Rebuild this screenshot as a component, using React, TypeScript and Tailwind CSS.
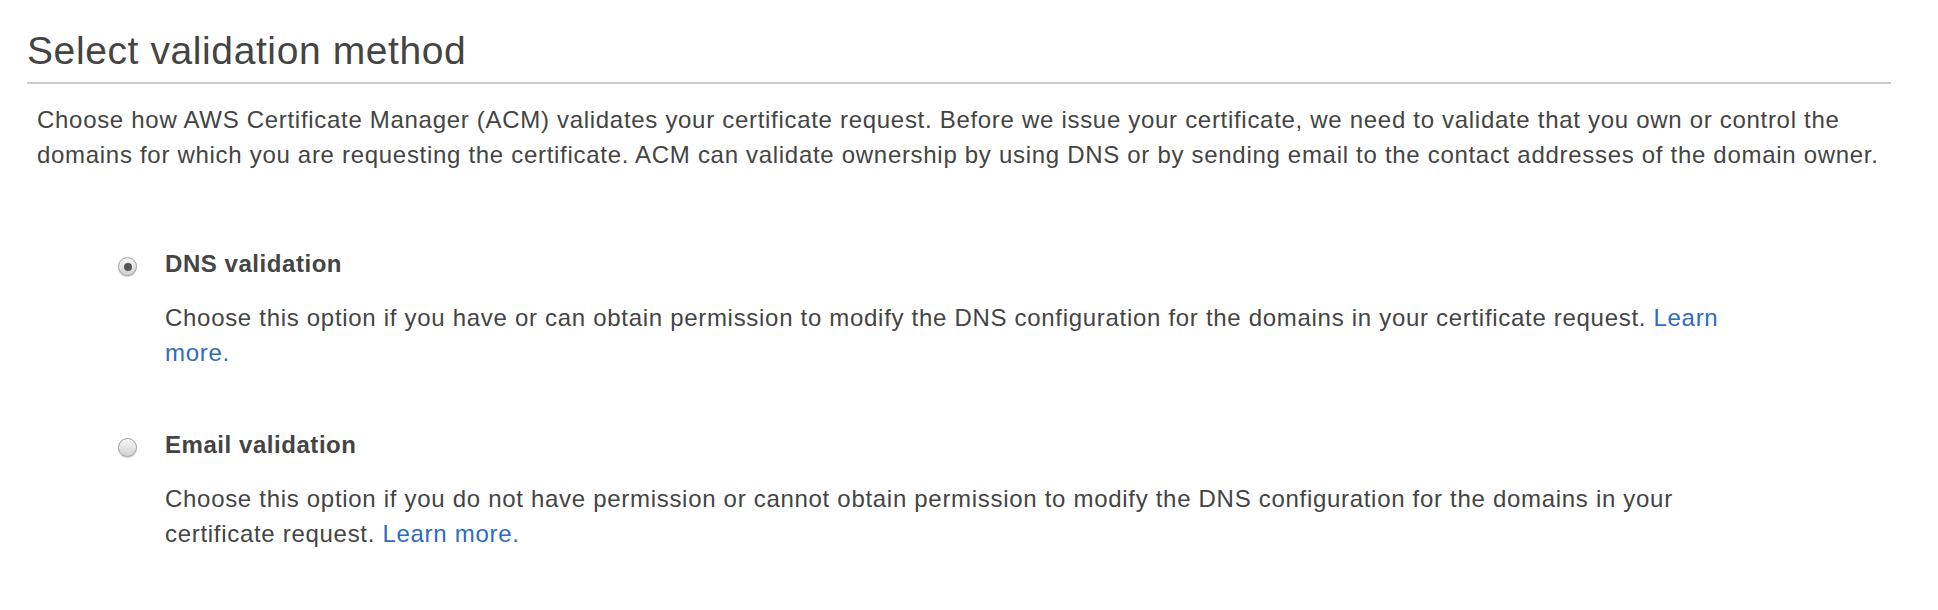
import React, { useState } from 'react';

type Method = 'dns' | 'email';

const Radio: React.FC<{ checked: boolean; onClick: () => void }> = ({ checked, onClick }) => (
  <button
    type="button"
    onClick={onClick}
    className="mt-[11px] w-[19px] h-[19px] shrink-0 rounded-full border border-[#a0a0a0] bg-gradient-to-b from-[#f7f7f7] to-[#d2d2d2] shadow-[0_1px_1px_rgba(0,0,0,0.2)] flex items-center justify-center"
  >
    {checked && <span className="w-[8px] h-[8px] rounded-full bg-[#555]" />}
  </button>
);

const App: React.FC = () => {
  const [method, setMethod] = useState<Method>('dns');

  return (
    <div className="w-full h-[610px] bg-white text-[#444] font-['Liberation_Sans',Arial,sans-serif] pl-[27px]">
      <h2 className="pt-[28px] text-[39px] leading-[46px] tracking-[0.6px] font-normal text-[#444]">Select validation method</h2>
      <div className="mt-[8px] w-[1864px] h-[2px] bg-[#cccccc]" />

      <p className="mt-[18px] ml-[10px] w-[1862px] text-[24px] leading-[35px] tracking-[0.7px]">
        Choose how AWS Certificate Manager (ACM) validates your certificate request. Before we issue your certificate, we need to validate that you own or control the domains for which you are requesting the certificate. ACM can validate ownership by using DNS or by sending email to the contact addresses of the domain owner.
      </p>

      <div className="mt-[74px] pl-[91px] flex flex-col gap-[57px] text-[24px] leading-[35px] tracking-[0.7px]">
        {/* DNS */}
        <div className="flex gap-[28px]">
          <Radio checked={method === 'dns'} onClick={() => setMethod('dns')} />
          <div className="w-[1585px]">
            <div className="font-bold tracking-[0.55px]">DNS validation</div>
            <p className="mt-[19px]">
              Choose this option if you have or can obtain permission to modify the DNS configuration for the domains in your certificate request.{' '}
              <a href="#" className="text-[#2f6bbf]">Learn more.</a>
            </p>
          </div>
        </div>

        {/* Email */}
        <div className="flex gap-[28px]">
          <Radio checked={method === 'email'} onClick={() => setMethod('email')} />
          <div className="w-[1585px]">
            <div className="font-bold tracking-[0.55px]">Email validation</div>
            <p className="mt-[19px]">
              Choose this option if you do not have permission or cannot obtain permission to modify the DNS configuration for the domains in your certificate request.{' '}
              <a href="#" className="text-[#2f6bbf]">Learn more.</a>
            </p>
          </div>
        </div>
      </div>
    </div>
  );
};

export default App;
